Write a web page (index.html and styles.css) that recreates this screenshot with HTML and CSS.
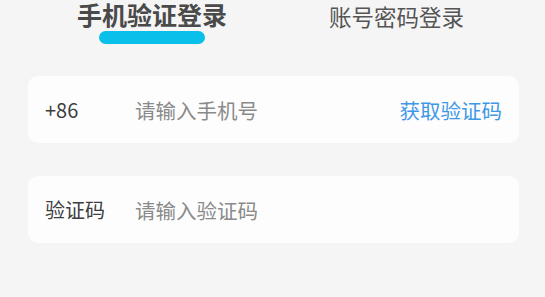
FILE: index.html
```html
<!DOCTYPE html>
<html lang="zh-CN">
<head>
  <meta charset="UTF-8">
  <meta name="viewport" content="width=device-width, initial-scale=1.0">
  <title>登录</title>
  <link rel="stylesheet" href="styles.css">
</head>
<body>
  <div class="login">
    <div class="tabs">
      <div class="tab active">
        <span class="tab-text">手机验证登录</span>
        <span class="tab-bar"></span>
      </div>
      <div class="tab">
        <span class="tab-text">账号密码登录</span>
      </div>
    </div>

    <div class="form">
      <div class="field">
        <div class="field-label">+86</div>
        <div class="field-input">请输入手机号</div>
        <div class="field-action">获取验证码</div>
      </div>
      <div class="field">
        <div class="field-label">验证码</div>
        <div class="field-input">请输入验证码</div>
      </div>
    </div>
  </div>
</body>
</html>
```

FILE: styles.css
```css
* {
  margin: 0;
  padding: 0;
  box-sizing: border-box;
  font-family: 'Noto Sans CJK SC', 'Noto Sans', sans-serif;
}

body {
  background-color: #F5F5F5;
  width: 545px;
  height: 297px;
  overflow: hidden;
}

.login {
  display: flex;
  flex-direction: column;
}

.tabs {
  display: flex;
  align-items: flex-start;
  gap: 102px;
  padding-left: 77px;
  height: 76px;
}

.tab {
  display: flex;
  flex-direction: column;
  align-items: center;
  color: #555555;
  font-size: 22.5px;
  line-height: 32px;
}

.tab.active {
  font-size: 25px;
  font-weight: bold;
  color: #4A4A4A;
  line-height: 29px;
}

.tab-bar {
  width: 106px;
  height: 13px;
  margin-top: 2px;
  border-radius: 7px;
  background: #0ABFEA;
}

.form {
  display: flex;
  flex-direction: column;
  gap: 33px;
  padding: 0 26px 0 28px;
}

.field {
  height: 67px;
  display: flex;
  align-items: center;
  padding: 0 17px;
  background: #FDFDFD;
  border-radius: 10px;
  font-size: 20px;
}

.field-label {
  width: 90px;
  color: #3E3E3E;
}

.field-input {
  flex: 1;
  color: #8A8A8A;
  font-size: 20.5px;
}

.field-action {
  color: #3F98E6;
  font-size: 20.5px;
}
```
